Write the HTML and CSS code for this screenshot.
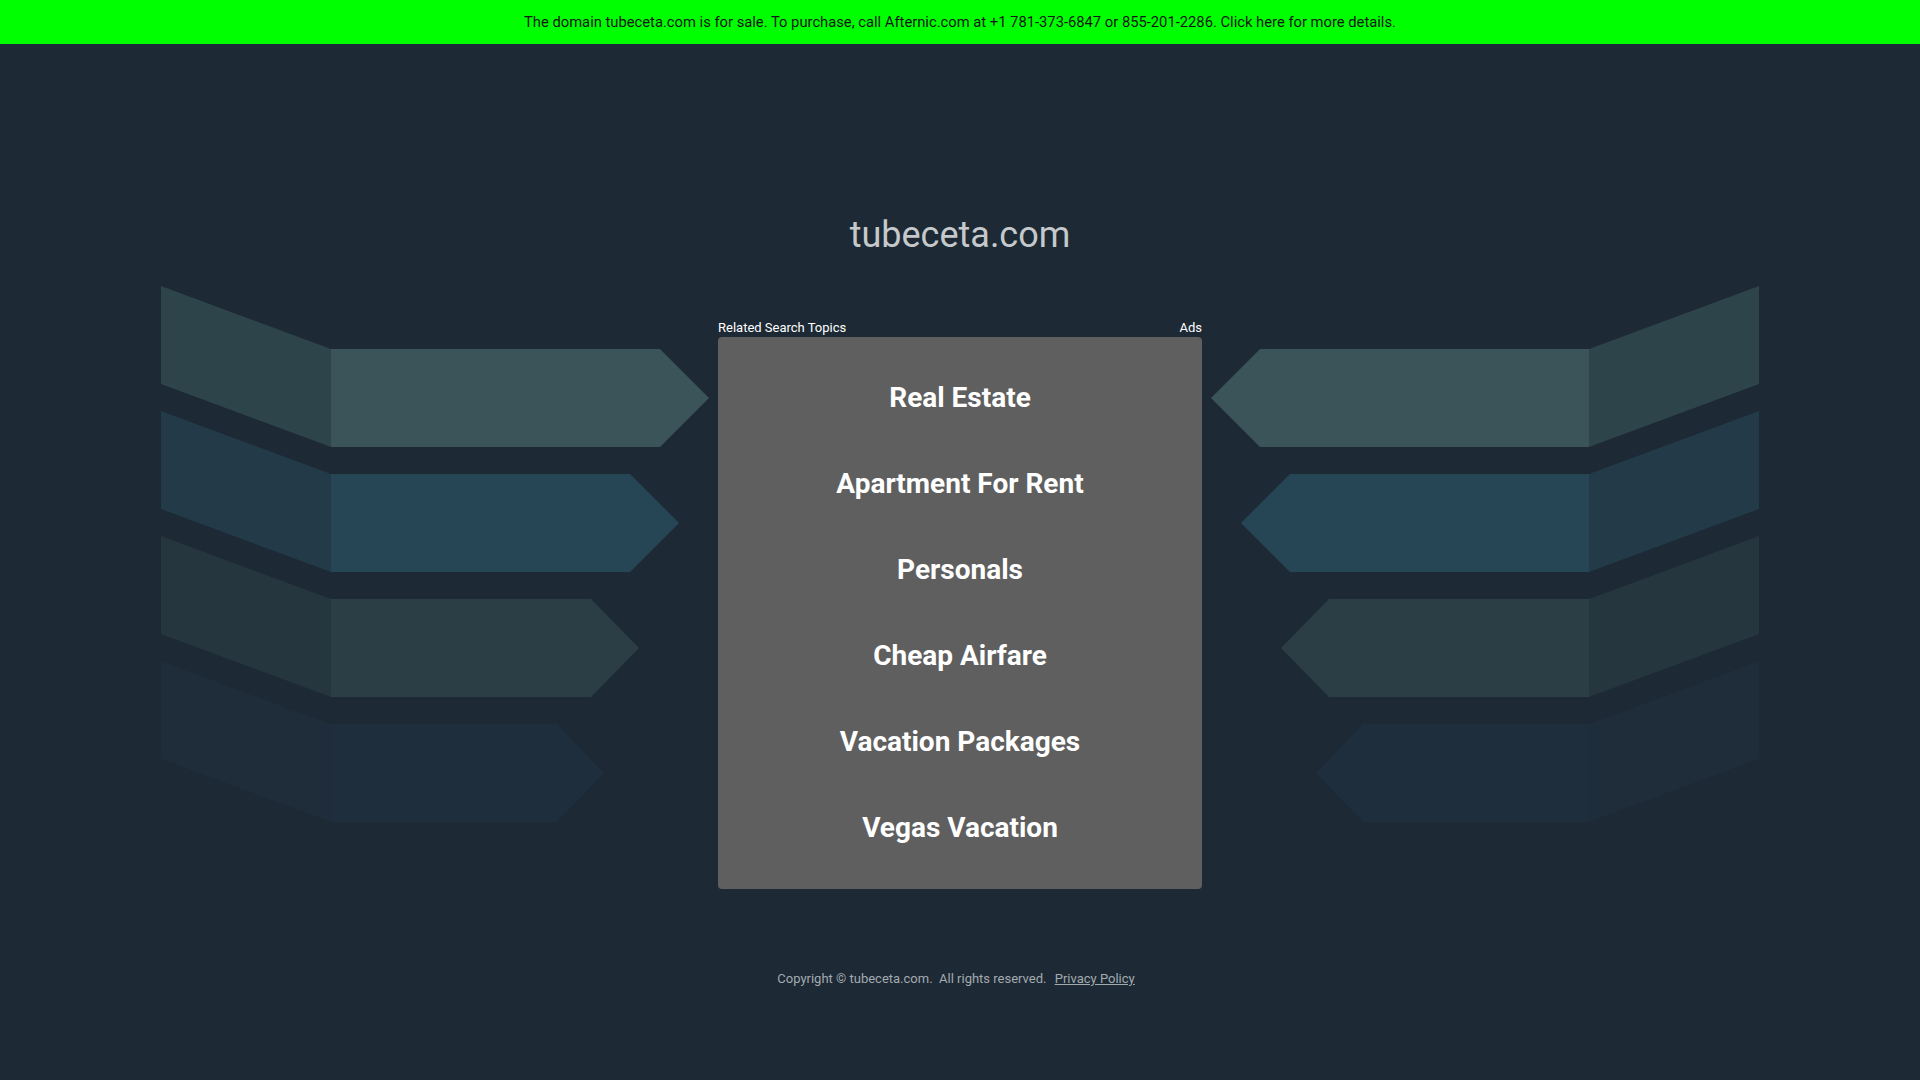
FILE: index.html
```html
<!DOCTYPE html>
<html lang="en">
<head>
<meta charset="utf-8">
<title>tubeceta.com</title>
<link rel="stylesheet" href="styles.css">
</head>
<body>
<div class="topbar">The domain tubeceta.com is for sale. To purchase, call Afternic.com at +1 781-373-6847 or 855-201-2286. Click here for more details.</div>
<main class="page">
  <h1 class="domain">tubeceta.com</h1>
  <div class="stage">
    <svg class="wing" width="548" height="537" viewBox="0 0 548 537">
      <g>
        <polygon class="a1p" points="0,0 170,63 170,161 0,98"/>
        <polygon class="a1r" points="170,63 499,63 548,112 499,161 170,161"/>
      </g>
      <g transform="translate(0,125)">
        <polygon class="a2p" points="0,0 170,63 170,161 0,98"/>
        <polygon class="a2r" points="170,63 469,63 518,112 469,161 170,161"/>
      </g>
      <g transform="translate(0,250)">
        <polygon class="a3p" points="0,0 170,63 170,161 0,98"/>
        <polygon class="a3r" points="170,63 430,63 478,112 430,161 170,161"/>
      </g>
      <g transform="translate(0,375)">
        <polygon class="a4p" points="0,0 170,63 170,161 0,98"/>
        <polygon class="a4r" points="170,63 396,63 443,112 396,161 170,161"/>
      </g>
    </svg>
    <div class="center">
      <div class="labels"><span>Related Search Topics</span><span>Ads</span></div>
      <div class="box">
        <a class="item" href="#">Real Estate</a>
        <a class="item" href="#">Apartment For Rent</a>
        <a class="item" href="#">Personals</a>
        <a class="item" href="#">Cheap Airfare</a>
        <a class="item" href="#">Vacation Packages</a>
        <a class="item" href="#">Vegas Vacation</a>
      </div>
    </div>
    <svg class="wing wing-right" width="548" height="537" viewBox="0 0 548 537">
      <g>
        <polygon class="a1p" points="0,0 170,63 170,161 0,98"/>
        <polygon class="a1r" points="170,63 499,63 548,112 499,161 170,161"/>
      </g>
      <g transform="translate(0,125)">
        <polygon class="a2p" points="0,0 170,63 170,161 0,98"/>
        <polygon class="a2r" points="170,63 469,63 518,112 469,161 170,161"/>
      </g>
      <g transform="translate(0,250)">
        <polygon class="a3p" points="0,0 170,63 170,161 0,98"/>
        <polygon class="a3r" points="170,63 430,63 478,112 430,161 170,161"/>
      </g>
      <g transform="translate(0,375)">
        <polygon class="a4p" points="0,0 170,63 170,161 0,98"/>
        <polygon class="a4r" points="170,63 396,63 443,112 396,161 170,161"/>
      </g>
    </svg>
  </div>
  <footer class="footer">
    <span>Copyright © tubeceta.com.&nbsp; All rights reserved.</span>
    <a class="privacy" href="#">Privacy Policy</a>
  </footer>
</main>
</body>
</html>
```
FILE: styles.css
```css
html, body {
  margin: 0;
  padding: 0;
}
body {
  background: #1d2934;
  font-family: Roboto, "Liberation Sans", Arial, sans-serif;
  min-height: 1080px;
}
.topbar {
  height: 44px;
  line-height: 44px;
  background: #00ff00;
  color: #151515;
  font-size: 14.75px;
  text-align: center;
}
.page {
  display: flex;
  flex-direction: column;
  align-items: center;
}
.domain {
  margin: 169px 0 0;
  font-size: 36px;
  line-height: 44px;
  font-weight: 400;
  color: #c5c9cc;
}
.stage {
  margin-top: 29px;
  display: flex;
  justify-content: center;
  align-items: flex-start;
  gap: 9px;
}
.wing {
  display: block;
  flex: none;
}
.wing-right {
  transform: scaleX(-1);
}
.a1p { fill: #2e444b; }
.a1r { fill: #3a5459; }
.a2p { fill: #233b49; }
.a2r { fill: #264656; }
.a3p { fill: #25363f; }
.a3r { fill: #2b3e46; }
.a4p { fill: #1e2d39; }
.a4r { fill: #1f2e3c; }
.center {
  width: 484px;
  margin-top: 34px;
  flex: none;
}
.labels {
  display: flex;
  justify-content: space-between;
  font-size: 13px;
  line-height: 16px;
  color: #ffffff;
  margin-bottom: 1px;
}
.box {
  background: #5f5f5f;
  border-radius: 4px;
  padding: 18px 0 18px;
  display: flex;
  flex-direction: column;
}
.item {
  display: block;
  height: 86px;
  line-height: 86px;
  text-align: center;
  font-size: 28px;
  font-weight: 700;
  color: #ffffff;
  text-decoration: none;
}
.footer {
  margin-top: 82px;
  padding-right: 8px;
  font-size: 13px;
  line-height: 16px;
  color: #a3aab0;
}
.privacy {
  margin-left: 5px;
  color: #a3aab0;
  text-decoration: underline;
}
```
